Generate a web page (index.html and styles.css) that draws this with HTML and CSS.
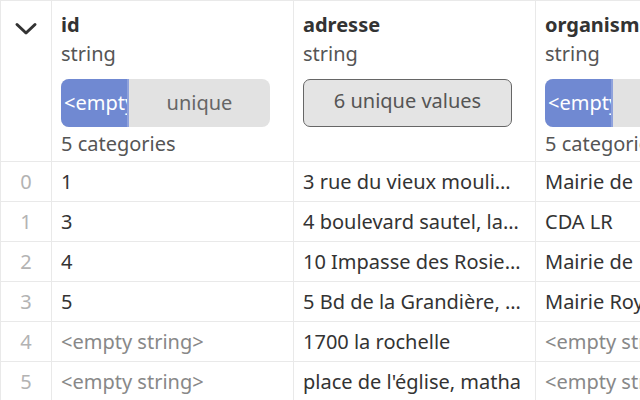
FILE: index.html
```html
<!DOCTYPE html>
<html lang="fr">
<head>
    <meta charset="UTF-8">
    <meta name="viewport" content="width=device-width, initial-scale=1.0">
    <title>Tableau</title>
    <link rel="stylesheet" href="styles.css">
</head>
<body>
    <table class="grid">
        <colgroup>
            <col class="col-index">
            <col class="col-data">
            <col class="col-data">
            <col class="col-data">
        </colgroup>
        <thead>
            <tr>
                <th class="index-head">
                    <svg class="chevron" width="24" height="14" viewBox="0 0 24 14">
                        <path d="M3 2.5 L12 11 L21 2.5" fill="none" stroke="#333" stroke-width="3" stroke-linecap="round" stroke-linejoin="round"/>
                    </svg>
                </th>
                <th>
                    <div class="col-name">id</div>
                    <div class="col-type">string</div>
                    <div class="hist">
                        <span class="hist-top">&lt;empty string&gt;</span>
                        <span class="hist-rest">unique</span>
                    </div>
                    <div class="col-type">5 categories</div>
                </th>
                <th>
                    <div class="col-name">adresse</div>
                    <div class="col-type">string</div>
                    <div class="unique-btn">6 unique values</div>
                </th>
                <th>
                    <div class="col-name">organisme</div>
                    <div class="col-type">string</div>
                    <div class="hist">
                        <span class="hist-top">&lt;empty string&gt;</span>
                        <span class="hist-rest">unique</span>
                    </div>
                    <div class="col-type">5 categories</div>
                </th>
            </tr>
        </thead>
        <tbody>
            <tr>
                <td class="idx">0</td>
                <td>1</td>
                <td>3 rue du vieux mouli…</td>
                <td>Mairie de</td>
            </tr>
            <tr>
                <td class="idx">1</td>
                <td>3</td>
                <td>4 boulevard sautel, la…</td>
                <td>CDA LR</td>
            </tr>
            <tr>
                <td class="idx">2</td>
                <td>4</td>
                <td>10 Impasse des Rosie…</td>
                <td>Mairie de</td>
            </tr>
            <tr>
                <td class="idx">3</td>
                <td>5</td>
                <td>5 Bd de la Grandière, …</td>
                <td>Mairie Royan</td>
            </tr>
            <tr>
                <td class="idx">4</td>
                <td class="empty">&lt;empty string&gt;</td>
                <td>1700 la rochelle</td>
                <td class="empty">&lt;empty string&gt;</td>
            </tr>
            <tr>
                <td class="idx">5</td>
                <td class="empty">&lt;empty string&gt;</td>
                <td>place de l'église, matha</td>
                <td class="empty">&lt;empty string&gt;</td>
            </tr>
        </tbody>
    </table>
</body>
</html>
```

FILE: styles.css
```css
html, body {
    overflow: hidden;
}

body {
    margin: 0;
    background: #fff;
    font-family: "Noto Sans", "Open Sans", sans-serif;
    font-size: 20px;
    color: #333;
}

.grid {
    border-collapse: collapse;
    table-layout: fixed;
    width: 777px;
}

.col-index {
    width: 51px;
}

.col-data {
    width: 242px;
}

th, td {
    border: 1px solid #e9e9e9;
    padding: 0 9px;
    text-align: left;
    white-space: nowrap;
    overflow: hidden;
}

thead th {
    height: 161px;
    vertical-align: top;
    padding-top: 9px;
    font-weight: normal;
    box-sizing: border-box;
}

.index-head {
    text-align: center;
    padding: 0;
}

.chevron {
    display: block;
    margin: 21px auto 0;
}

.col-name {
    font-weight: bold;
    line-height: 29px;
}

.col-type {
    line-height: 29px;
    color: #555;
}

.hist {
    display: flex;
    width: 209px;
    height: 48px;
    margin: 11px 0 2px;
    border-radius: 8px;
    overflow: hidden;
    background: #e2e2e2;
}

.hist-top {
    flex: none;
    width: 68px;
    padding-left: 3px;
    box-sizing: border-box;
    background: #7089d2;
    border-right: 2px solid #8fa2dc;
    color: #fff;
    line-height: 48px;
    overflow: hidden;
}

.hist-rest {
    flex: 1;
    text-align: center;
    line-height: 48px;
    color: #666;
}

.unique-btn {
    width: 209px;
    height: 48px;
    margin-top: 11px;
    box-sizing: border-box;
    border: 1.5px solid #666;
    border-radius: 7px;
    background: #e4e4e4;
    color: #555;
    text-align: center;
    line-height: 42px;
}

tbody td {
    height: 39px;
    vertical-align: middle;
    padding-top: 0;
    padding-bottom: 0;
}

td.idx {
    text-align: center;
    color: #b3b3b3;
    padding: 0;
}

td.empty {
    color: #888;
}
```
